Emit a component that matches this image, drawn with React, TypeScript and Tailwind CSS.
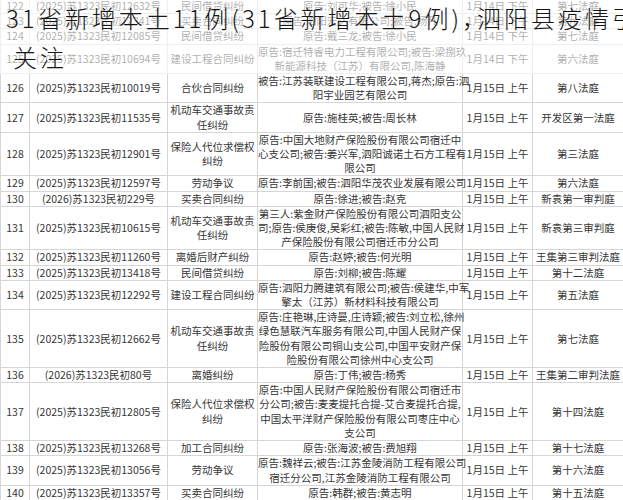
import React from 'react';

type Row = {
  no: number;
  caseNo: string;
  type: string[];
  parties: string[];
  date: string;
  court: string;
};

const rows: Row[] = [
  { no: 122, caseNo: '(2025)苏1323民初12632号', type: ['民间借贷纠纷'], parties: ['原告:刘可华;被告:徐小民'], date: '1月14日 下午', court: '第七法庭' },
  { no: 123, caseNo: '(2025)苏1323民初12341号', type: ['买卖合同纠纷'], parties: ['原告:泗阳宏达有限公司;被告:杨凡'], date: '1月14日 下午', court: '第九法庭' },
  { no: 124, caseNo: '(2025)苏1323民初12085号', type: ['民间借贷纠纷'], parties: ['原告:戴三龙;被告:徐小民'], date: '1月14日 下午', court: '第七法庭' },
  { no: 125, caseNo: '(2025)苏1323民初10694号', type: ['建设工程合同纠纷'], parties: ['原告:宿迁特睿电力工程有限公司;被告:梁捌玖', '新能源科技（江苏）有限公司,陈海静'], date: '1月14日 下午', court: '第六法庭' },
  { no: 126, caseNo: '(2025)苏1323民初10019号', type: ['合伙合同纠纷'], parties: ['被告:江苏装联建设工程有限公司,蒋杰;原告:泗', '阳宇业园艺有限公司'], date: '1月15日 上午', court: '第八法庭' },
  { no: 127, caseNo: '(2025)苏1323民初11535号', type: ['机动车交通事故责', '任纠纷'], parties: ['原告:施桂英;被告:周长林'], date: '1月15日 上午', court: '开发区第一法庭' },
  { no: 128, caseNo: '(2025)苏1323民初12901号', type: ['保险人代位求偿权', '纠纷'], parties: ['原告:中国大地财产保险股份有限公司宿迁中', '心支公司;被告:姜兴军,泗阳诚诺土石方工程有', '限公司'], date: '1月15日 上午', court: '第三法庭' },
  { no: 129, caseNo: '(2025)苏1323民初12597号', type: ['劳动争议'], parties: ['原告:李前国;被告:泗阳华茂农业发展有限公司'], date: '1月15日 上午', court: '第六法庭' },
  { no: 130, caseNo: '(2026)苏1323民初229号', type: ['买卖合同纠纷'], parties: ['原告:徐进;被告:赵克'], date: '1月15日 上午', court: '新袁第一审判庭' },
  { no: 131, caseNo: '(2025)苏1323民初10615号', type: ['机动车交通事故责', '任纠纷'], parties: ['第三人:紫金财产保险股份有限公司泗阳支公', '司;原告:侯庚俊,吴彩红;被告:陈敏,中国人民财', '产保险股份有限公司宿迁市分公司'], date: '1月15日 上午', court: '新袁第三审判庭' },
  { no: 132, caseNo: '(2025)苏1323民初11260号', type: ['离婚后财产纠纷'], parties: ['原告:赵婷;被告:何光明'], date: '1月15日 上午', court: '王集第三审判法庭' },
  { no: 133, caseNo: '(2025)苏1323民初13418号', type: ['民间借贷纠纷'], parties: ['原告:刘柳;被告:陈耀'], date: '1月15日 上午', court: '第十二法庭' },
  { no: 134, caseNo: '(2025)苏1323民初12292号', type: ['建设工程合同纠纷'], parties: ['原告:泗阳力腾建筑有限公司;被告:侯建华,中军', '擎太（江苏）新材料科技有限公司'], date: '1月15日 上午', court: '第五法庭' },
  { no: 135, caseNo: '(2025)苏1323民初12662号', type: ['机动车交通事故责', '任纠纷'], parties: ['原告:庄艳琳,庄诗曼,庄诗颖;被告:刘立松,徐州', '绿色慧联汽车服务有限公司,中国人民财产保', '险股份有限公司铜山支公司,中国平安财产保', '险股份有限公司徐州中心支公司'], date: '1月15日 上午', court: '第七法庭' },
  { no: 136, caseNo: '(2026)苏1323民初80号', type: ['离婚纠纷'], parties: ['原告:丁伟;被告:杨秀'], date: '1月15日 上午', court: '王集第二审判法庭' },
  { no: 137, caseNo: '(2025)苏1323民初12805号', type: ['保险人代位求偿权', '纠纷'], parties: ['原告:中国人民财产保险股份有限公司宿迁市', '分公司;被告:麦麦提托合提-艾合麦提托合提,', '中国太平洋财产保险股份有限公司枣庄中心', '支公司'], date: '1月15日 上午', court: '第十四法庭' },
  { no: 138, caseNo: '(2025)苏1323民初13268号', type: ['加工合同纠纷'], parties: ['原告:张海波;被告:费旭翔'], date: '1月15日 上午', court: '第十七法庭' },
  { no: 139, caseNo: '(2025)苏1323民初13056号', type: ['劳动争议'], parties: ['原告:魏祥云;被告:江苏金陵消防工程有限公司', '宿迁分公司,江苏金陵消防工程有限公司'], date: '1月15日 上午', court: '第十六法庭' },
  { no: 140, caseNo: '(2025)苏1323民初13357号', type: ['买卖合同纠纷'], parties: ['原告:韩群;被告:黄志明'], date: '1月15日 上午', court: '第十五法庭' },
];

const Lines = ({ lines }: { lines: string[] }) => (
  <>
    {lines.map((l, i) => (
      <React.Fragment key={i}>
        {i > 0 && <br />}
        {l}
      </React.Fragment>
    ))}
  </>
);

const cell = 'border border-[#d6d6d6] px-0 py-0 text-center align-middle whitespace-nowrap';

export default function App() {
  return (
    <div className="relative w-[623px] h-[500px] overflow-hidden bg-white font-['Noto_Sans_CJK_SC','Noto_Sans',sans-serif]">
      {/* schedule table */}
      <table className="-mt-[2px] w-[623px] table-fixed border-collapse text-[10.5px] leading-[14.2px] text-[#363636]">
        <colgroup>
          <col className="w-[29px]" />
          <col className="w-[138px]" />
          <col className="w-[90px]" />
          <col className="w-[205px]" />
          <col className="w-[70px]" />
          <col className="w-[91px]" />
        </colgroup>
        <tbody>
          {rows.map((r) => (
            <tr key={r.no}>
              <td className={cell}>{r.no}</td>
              <td className={cell}>{r.caseNo}</td>
              <td className={cell}><Lines lines={r.type} /></td>
              <td className={cell}><Lines lines={r.parties} /></td>
              <td className={cell}>{r.date}</td>
              <td className={cell}>{r.court}</td>
            </tr>
          ))}
        </tbody>
      </table>

      {/* headline laid over the top of the table */}
      <div className="absolute left-0 top-0 w-full h-[74px] bg-white/60">
        <div className="-mt-[2px] text-[24px] leading-[39px] font-light tracking-[3px] text-[#161616] whitespace-nowrap">
          <div className="pl-[6px]">
            31省新增本土11例(31省新增本土9例)<span className="[font-feature-settings:'halt']">，</span>泗阳县疫情引
          </div>
          <div className="pl-[13px]">关注</div>
        </div>
      </div>
    </div>
  );
}
